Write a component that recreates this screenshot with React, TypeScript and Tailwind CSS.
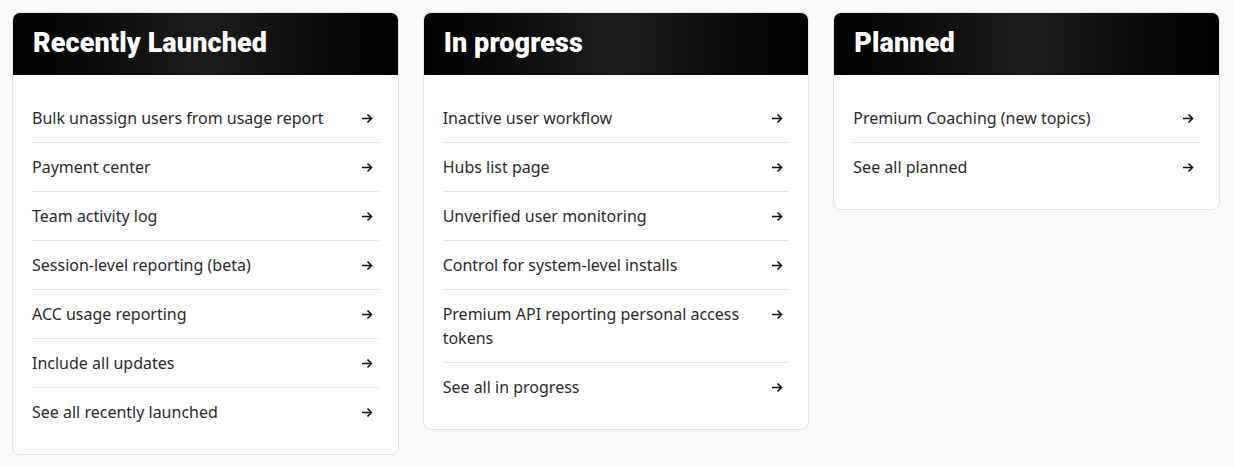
const columns = [
  {
    title: "Recently Launched",
    items: [
      "Bulk unassign users from usage report",
      "Payment center",
      "Team activity log",
      "Session-level reporting (beta)",
      "ACC usage reporting",
      "Include all updates",
      "See all recently launched",
    ],
  },
  {
    title: "In progress",
    items: [
      "Inactive user workflow",
      "Hubs list page",
      "Unverified user monitoring",
      "Control for system-level installs",
      "Premium API reporting personal access tokens",
      "See all in progress",
    ],
  },
  {
    title: "Planned",
    items: ["Premium Coaching (new topics)", "See all planned"],
  },
];

function Arrow() {
  return (
    <svg width="12" height="11" viewBox="0 0 12 11" fill="none" className="shrink-0 mt-[7px]">
      <path d="M1 5.5h9.5M6.5 1.5l4 4-4 4" stroke="#111" strokeWidth="1.6" />
    </svg>
  );
}

function Column({ c }: { c: (typeof columns)[number] }) {
  return (
    <div className="bg-white border border-[#e3e3e3] rounded-lg overflow-hidden">
      <div className="h-[63px] -mx-px -mt-px px-[21px] flex items-center bg-[linear-gradient(90deg,#000_0%,#1c1c1c_50%,#000_100%)] rounded-t-lg">
        <h2 className="text-white text-[27px] font-black font-['Roboto',sans-serif] tracking-[0.1px] leading-none">
          {c.title}
        </h2>
      </div>
      <ul className="px-[19px] pt-[19px] pb-[18px]">
        {c.items.map((it, i) => (
          <li
            key={i}
            className={`flex items-start justify-between gap-6 py-3 ${i < c.items.length - 1 ? "border-b border-[#e2e2e2]" : ""}`}
          >
            <span className="text-[16px] leading-6 text-[#2a2a2a] font-['Noto_Sans',sans-serif]">{it}</span>
            <span className="pr-[6px]">
              <Arrow />
            </span>
          </li>
        ))}
      </ul>
    </div>
  );
}

export default function App() {
  return (
    <div className="min-h-[467px] bg-[#f8f8f8] pl-3 pr-[14px] pt-3">
      <div className="grid grid-cols-3 gap-6 items-start">
        {columns.map((c) => (
          <Column key={c.title} c={c} />
        ))}
      </div>
    </div>
  );
}
